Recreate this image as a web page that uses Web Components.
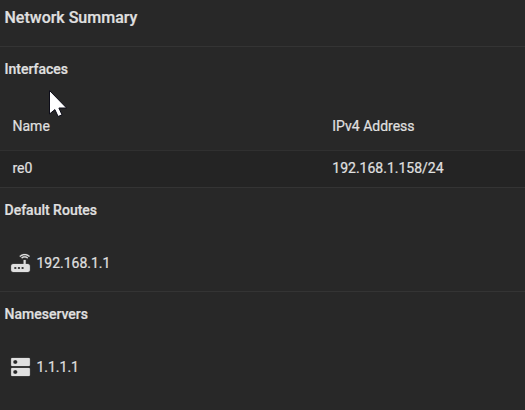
<!DOCTYPE html>
<html lang="en">
<head>
<meta charset="utf-8">
<title>Network Summary</title>
<style>
    body {
        margin: 0;
        height: 410px;
        overflow: hidden;
        background: #282828;
        color: #e0e0e0;
        font-family: Roboto, "Liberation Sans", sans-serif;
        font-size: 14px;
        -webkit-text-stroke: 0.2px;
    }
</style>
</head>
<body>
<network-summary heading="Network Summary">
    <summary-section heading="Interfaces">
        <interface-table>
            <interface-row header><span>Name</span><span slot="address">IPv4 Address</span></interface-row>
            <interface-row><span>re0</span><span slot="address">192.168.1.158/24</span></interface-row>
        </interface-table>
    </summary-section>
    <summary-section heading="Default Routes">
        <address-item icon="router">192.168.1.1</address-item>
    </summary-section>
    <summary-section heading="Nameservers">
        <address-item icon="dns">1.1.1.1</address-item>
    </summary-section>
</network-summary>
<mouse-pointer></mouse-pointer>

<script>
const icons = {
    router: 'M20.2 5.9l.8-.8C19.6 3.7 17.8 3 16 3s-3.6.7-5 2.1l.8.8C13 4.8 14.5 4.2 16 4.2s3 .6 4.2 1.7zm-.9.8c-.9-.9-2.1-1.4-3.3-1.4s-2.4.5-3.3 1.4l.8.8c.7-.7 1.6-1 2.5-1 .9 0 1.8.3 2.5 1l.8-.8zM19 13h-2V9h-2v4H5c-1.1 0-2 .9-2 2v4c0 1.1.9 2 2 2h14c1.1 0 2-.9 2-2v-4c0-1.1-.9-2-2-2zM8 18H6v-2h2v2zm3.5 0h-2v-2h2v2zm3.5 0h-2v-2h2v2z',
    dns: 'M20 13H4c-.55 0-1 .45-1 1v6c0 .55.45 1 1 1h16c.55 0 1-.45 1-1v-6c0-.55-.45-1-1-1zM7 19c-1.1 0-2-.9-2-2s.9-2 2-2 2 .9 2 2-.9 2-2 2zM20 3H4c-.55 0-1 .45-1 1v6c0 .55.45 1 1 1h16c.55 0 1-.45 1-1V4c0-.55-.45-1-1-1zM7 9c-1.1 0-2-.9-2-2s.9-2 2-2 2 .9 2 2-.9 2-2 2z'
};

class NetworkSummary extends HTMLElement {
    constructor() {
        super();
        this.attachShadow({mode: 'open'});
    }

    connectedCallback() {
        this.shadowRoot.innerHTML = `
            <style>
                :host {
                    display: flex;
                    flex-direction: column;
                }
                h3 {
                    margin: 0;
                    padding: 6px 4.5px 16px;
                    font-size: 16px;
                    line-height: 24px;
                    font-weight: 500;
                }
            </style>
            <h3>${this.getAttribute('heading')}</h3>
            <slot></slot>
        `;
    }
}

class SummarySection extends HTMLElement {
    constructor() {
        super();
        this.attachShadow({mode: 'open'});
    }

    connectedCallback() {
        this.shadowRoot.innerHTML = `
            <style>
                :host {
                    display: block;
                    border-top: 1px solid #343434;
                }
                h4 {
                    margin: 0;
                    padding: 12px 4.5px;
                    font-size: 14px;
                    line-height: 20px;
                    font-weight: 500;
                }
            </style>
            <h4>${this.getAttribute('heading')}</h4>
            <slot></slot>
        `;
    }
}

class InterfaceTable extends HTMLElement {
    constructor() {
        super();
        this.attachShadow({mode: 'open'});
    }

    connectedCallback() {
        this.shadowRoot.innerHTML = `
            <style>
                :host {
                    display: flex;
                    flex-direction: column;
                    padding-top: 11px;
                }
            </style>
            <slot></slot>
        `;
    }
}

class InterfaceRow extends HTMLElement {
    constructor() {
        super();
        this.attachShadow({mode: 'open'});
    }

    connectedCallback() {
        this.shadowRoot.innerHTML = `
            <style>
                :host {
                    display: grid;
                    grid-template-columns: 319.8px 1fr;
                    align-items: center;
                    height: 34px;
                    padding: 0 12.5px 2px;
                    background: #242424;
                }
                :host([header]) {
                    height: 48px;
                    padding-bottom: 0;
                    background: none;
                    border-bottom: 1px solid #303030;
                }
            </style>
            <slot></slot>
            <slot name="address"></slot>
        `;
    }
}

class AddressItem extends HTMLElement {
    constructor() {
        super();
        this.attachShadow({mode: 'open'});
    }

    connectedCallback() {
        this.shadowRoot.innerHTML = `
            <style>
                :host {
                    display: flex;
                    align-items: center;
                    gap: 3.4px;
                    height: 48px;
                    padding: 7px 8px 4px;
                }
                svg {
                    width: 25px;
                    height: 24px;
                    fill: currentColor;
                }
            </style>
            <svg viewBox="0 0 24 24" preserveAspectRatio="none"><path d="${icons[this.getAttribute('icon')]}" stroke="currentColor" stroke-width=".2"/></svg>
            <span><slot></slot></span>
        `;
    }
}

class MousePointer extends HTMLElement {
    constructor() {
        super();
        this.attachShadow({mode: 'open'});
    }

    connectedCallback() {
        this.shadowRoot.innerHTML = `
            <style>
                :host {
                    position: absolute;
                    left: 49px;
                    top: 89px;
                }
                svg {
                    display: block;
                }
            </style>
            <svg width="20" height="29" viewBox="0 0 20 29">
                <path d="M.5 1.5v23.5l5.4-4.4 3.2 6.9 3.9-1.7-3.1-6.8h7.7z" fill="#fff" stroke="#0c0c18"/>
            </svg>
        `;
    }
}

customElements.define('network-summary', NetworkSummary);
customElements.define('summary-section', SummarySection);
customElements.define('interface-table', InterfaceTable);
customElements.define('interface-row', InterfaceRow);
customElements.define('address-item', AddressItem);
customElements.define('mouse-pointer', MousePointer);
</script>
</body>
</html>
